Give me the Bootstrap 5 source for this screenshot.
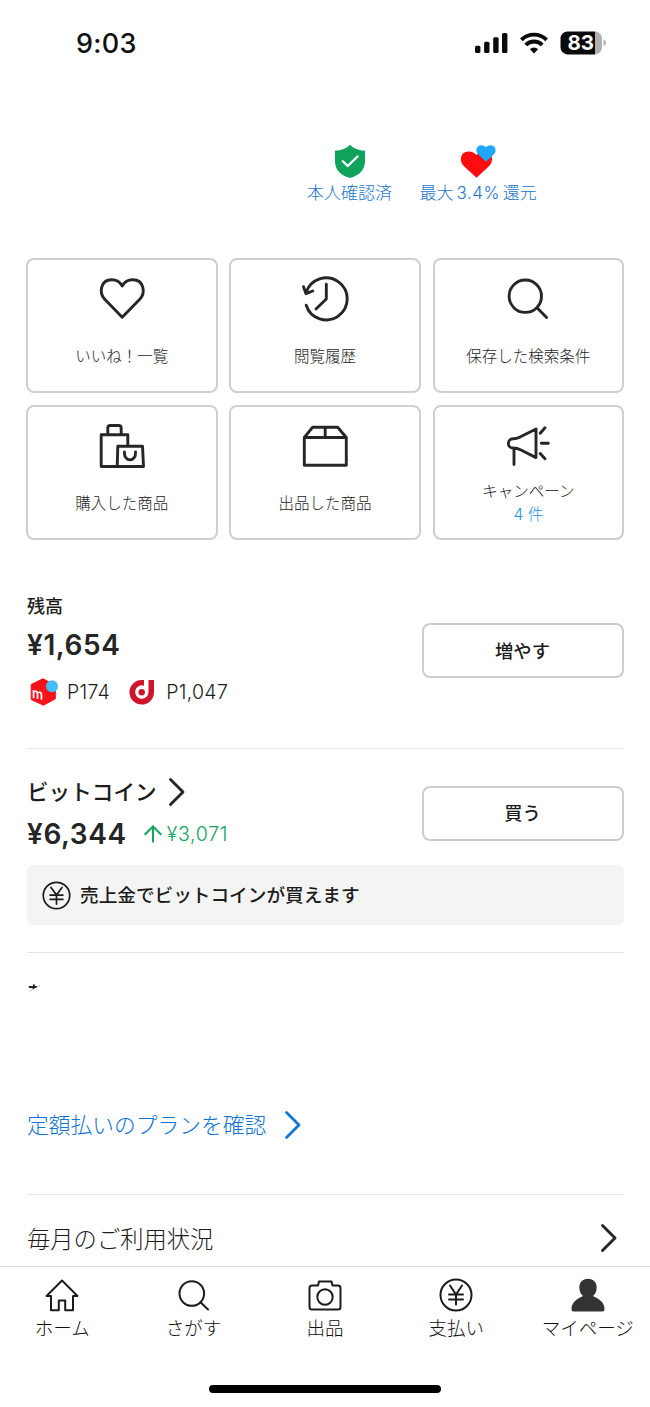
<!DOCTYPE html>
<html lang="ja">
<head>
<meta charset="utf-8">
<meta name="viewport" content="width=device-width, initial-scale=1">
<title>マイページ</title>
<link href="https://cdn.jsdelivr.net/npm/bootstrap@5.3.0/dist/css/bootstrap.min.css" rel="stylesheet">
<style>
  body { font-family: Inter, "Noto Sans CJK JP", sans-serif; color: #1c1c1c; background: #fff; }
  svg { display: block; flex: none; overflow: visible; }
  .screen { width: 650px; height: 1407px; overflow: hidden; }
  .statusbar { height: 86px; padding: 28px 44px 0 76px; }
  .clock { font-size: 27px; font-weight: 550; line-height: 32px; letter-spacing: .3px; color: #111; }
  .status-icons { gap: 12px; padding-top: 3px; }
  .perks { height: 172px; padding: 58px 110px 0 307px; gap: 27.5px; }
  .perk { color: #1b75cc; font-size: 17px; font-weight: 300; line-height: 20px; text-decoration: none; white-space: nowrap; }
  .perk svg { margin-bottom: 5.4px; }
  .rate { margin: 0 3px; letter-spacing: .5px; font-weight: 350; }
  .inset-x { margin-left: 27px; margin-right: 26.5px; }
  .tiles { display: grid; grid-template-columns: repeat(3, 191.5px); grid-auto-rows: 135px; gap: 12px 11.8px; margin-left: 26px; }
  .tile { border: 2px solid #cfcfcf; border-radius: 8px; padding-top: 15px; color: #1c1c1c; text-decoration: none; font-size: 15.5px; font-weight: 300; line-height: 20px; white-space: nowrap; }
  .tile span { margin-top: 24px; }
  .tile .two-line { margin-top: 12px; }
  .tile .tally { margin-top: 3px; color: #1a8fee; }
  .ico { fill: none; stroke: #262626; stroke-width: 2.9; stroke-linecap: round; stroke-linejoin: round; }
  .rule { border-bottom: 1.5px solid #e6e6e6; }
  .balance { height: 209px; padding-top: 55px; }
  .bitcoin { height: 203.5px; padding-top: 28px; }
  .label-s { font-size: 18px; font-weight: 500; line-height: 24px; }
  .label-m { font-size: 21.6px; font-weight: 500; line-height: 30px; }
  .amount { font-size: 28px; font-weight: 600; line-height: 36px; letter-spacing: .6px; color: #262626; }
  .amount-row { margin-top: 9px; height: 36px; }
  .pts { font-size: 19.5px; font-weight: 350; line-height: 28px; letter-spacing: .3px; margin-top: 15px; }
  .d-mark { margin-left: 19px; margin-right: 11px; }
  .gain { color: #12a35c; font-size: 19.5px; font-weight: 350; line-height: 28px; letter-spacing: .7px; }
  .gain-arrow { margin: 0 5px 0 17px; }
  .act { width: 202px; height: 55px; border: 2px solid #cdcdcd; border-radius: 8px; font-size: 18.3px; font-weight: 500; color: #1c1c1c; padding: 0; line-height: 50px; }
  .act-low { margin-top: 28px; }
  .act-high { margin-top: 8.8px; }
  .notice { height: 60px; background: #f4f4f4; border-radius: 6px; margin-top: 13px; padding-left: 15px; gap: 9px; font-size: 18.65px; font-weight: 500; }
  .notice span { padding-top: 2px; }
  .plan { height: 242.5px; padding-top: 28px; }
  .plan a { margin-top: 117px; color: #1173d4; font-size: 21.75px; font-weight: 300; line-height: 30px; text-decoration: none; gap: 19px; }
  .usage { height: 71px; padding: 29px 7px 0 0; font-size: 23.3px; font-weight: 300; line-height: 32px; }
  .tabs { height: 141px; border-top: 1.5px solid #e0e0e0; padding-top: 9px; font-size: 18.5px; font-weight: 300; line-height: 24px; }
  .tabs a { color: #111; text-decoration: none; width: 131.4px; white-space: nowrap; }
  .tabs svg { margin-bottom: 2px; }
  .tabrow { margin: 0 -3.5px; }
  .thin { fill: none; stroke: #1c1c1c; stroke-width: 2; stroke-linecap: round; stroke-linejoin: round; }
  .homebar { width: 232px; height: 8px; border-radius: 4px; background: #000; margin-top: 44.5px; }
</style>
</head>
<body>
<div class="screen d-flex flex-column mx-auto">

  <header class="statusbar d-flex justify-content-between align-items-start">
    <div class="clock">9:03</div>
    <div class="status-icons d-flex">
      <svg width="33" height="24" viewBox="0 0 33 24"><g fill="#0a0a0a"><rect x="0" y="14.7" width="5.4" height="7.3" rx="1.6"/><rect x="9.1" y="10.7" width="5.4" height="11.3" rx="1.6"/><rect x="18.2" y="6.2" width="5.4" height="15.8" rx="1.6"/><rect x="27" y="2" width="5.4" height="20" rx="1.6"/></g></svg>
      <svg width="28" height="24" viewBox="0 0 28 24"><g fill="none" stroke="#0a0a0a" stroke-width="3.9"><path d="M1.4 8.8A18 18 0 0 1 26.6 8.8"/><path d="M5.800 14A11.400 11.400 0 0 1 22.200 14"/></g><path d="M14 22.400L9.900 18.300A5.800 5.800 0 0 1 18.100 18.300Z" fill="#0a0a0a"/></svg>
      <svg width="46" height="24" viewBox="0 0 46 24"><path d="M7.500 .4H35V23.400H7.500A7 7 0 0 1 .5 16.400V7.400A7 7 0 0 1 7.500 .4Z" fill="#0a0a0a"/><path d="M35 .4A7 7 0 0 1 42 7.400V16.400A7 7 0 0 1 35 23.400Z" fill="#b0b0b0"/><path d="M43.600 8.300Q46 9.500 46 12T43.600 15.600Z" fill="#b0b0b0"/><text x="20.800" y="19.200" text-anchor="middle" font-size="20.500" font-weight="700" fill="#fff">83</text></svg>
    </div>
  </header>

  <section class="perks d-flex">
    <a href="#" class="perk d-flex flex-column align-items-center">
      <svg width="32" height="34" viewBox="0 0 32 34"><path d="M16 .7C19.500 4.400 24.500 6.300 31 6.800V17.500C31 26 25 31.500 16 34C7 31.500 1 26 1 17.500V6.800C7.500 6.300 12.500 4.400 16 .7Z" fill="#10a35c"/><path d="M8.800 17.200L13.700 22L23.500 12.500" fill="none" stroke="#fff" stroke-width="2.300" stroke-linecap="round" stroke-linejoin="round"/></svg>
      <span>本人確認済</span>
    </a>
    <a href="#" class="perk d-flex flex-column align-items-center">
      <svg width="36" height="34" viewBox="0 0 36 34"><path d="M16.500 33.700L4 22.300C-1.500 16.800 .5 7.700 8.300 7.500C12 7.400 14.500 8.800 16.500 11C18.500 8.800 21 7.400 24.700 7.500C32.500 7.700 34.500 16.800 29 22.300Z" fill="#ff0c10"/><path d="M26 17.700L18.300 10.600C14.500 6.500 16.700 1.300 21.300 1.200C23.500 1.200 24.800 2 26 3.300C27.200 2 28.500 1.200 30.700 1.200C35.300 1.300 37.500 6.500 33.700 10.600Z" fill="#1da8fb"/></svg>
      <span>最大<span class="rate">3.4%</span>還元</span>
    </a>
  </section>

  <nav class="tiles">
    <a href="#" class="tile d-flex flex-column align-items-center">
      <svg class="ico" width="48" height="48" viewBox="0 0 48 48"><path d="M24.200 42.200L6.500 24C.5 17 3 5 13.500 4.800C18.500 4.700 22 7 24.200 11C26.400 7 30 4.700 35 4.800C45.500 5 48 17 42 24Z"/></svg>
      <span>いいね！一覧</span>
    </a>
    <a href="#" class="tile d-flex flex-column align-items-center">
      <svg class="ico" width="48" height="48" viewBox="0 0 48 48"><path d="M5.200 17.500A21 21 0 1 1 5.200 30.200M2.500 11.700L5 18.700L11.700 16M25.300 9.300V24L15 34"/></svg>
      <span>閲覧履歴</span>
    </a>
    <a href="#" class="tile d-flex flex-column align-items-center">
      <svg class="ico" width="48" height="48" viewBox="0 0 48 48"><circle cx="21.300" cy="21.200" r="16.200"/><path d="M33.200 33L42.600 42.500"/></svg>
      <span>保存した検索条件</span>
    </a>
    <a href="#" class="tile d-flex flex-column align-items-center">
      <svg class="ico" width="48" height="48" viewBox="0 0 48 48"><path d="M19.200 44.500H3.200V12.800H29.800V23.500M9.800 12.500V6Q9.800 3.500 12.300 3.500H20.700Q23.200 3.500 23.200 6V12.500M19.800 24.200H44.500L45.500 44.500H19.200ZM26.500 30C25.500 40.500 38.500 40.500 37.500 30"/></svg>
      <span>購入した商品</span>
    </a>
    <a href="#" class="tile d-flex flex-column align-items-center">
      <svg class="ico" width="48" height="48" viewBox="0 0 48 48"><path d="M3.300 15.500L11.700 5.200H36.700L45.300 15.500V43.200H3.300ZM3.300 15.500H45.300M24.200 5.200V15.500"/></svg>
      <span>出品した商品</span>
    </a>
    <a href="#" class="tile d-flex flex-column align-items-center">
      <svg class="ico" width="48" height="48" viewBox="0 0 48 48"><path d="M9 16.800C13 17 14 16 17 14.500L32 7V35.600L17 28C14 26.400 13 26 9 26A4.600 4.600 0 0 1 9 16.800ZM10 26.500V42.500M36.200 11.200L41 5.800M37.300 21.300H44.300M36.200 31.500L41 36.800"/></svg>
      <span class="two-line">キャンペーン</span>
      <span class="tally">4 件</span>
    </a>
  </nav>

  <section class="balance rule inset-x d-flex justify-content-between">
    <div>
      <div class="label-s">残高</div>
      <div class="amount mt-2">¥1,654</div>
      <div class="pts d-flex align-items-center">
        <svg width="32" height="28" viewBox="0 0 32 28" class="me-2"><path d="M16 .8L28.300 7.200V20.800L16.500 27.200L4.200 21.500V6.500Z" fill="#f7121a" stroke="#f7121a" stroke-linejoin="round"/><circle cx="25" cy="8.200" r="6" fill="#45bdfb"/><text transform="translate(5 19.800) skewY(12) scale(.85 1)" font-size="14.500" font-weight="600" fill="#fff">m</text></svg>
        <span>P174</span>
        <svg width="26" height="26" viewBox="0 0 26 26" class="d-mark"><path d="M25 1H19.500V13A6.700 6.700 0 1 1 15 6.700V1H13A12.300 12.300 0 1 0 25 13.500Z" fill="#cf152d"/><circle cx="12.700" cy="13.300" r="3.200" fill="#cf152d"/></svg>
        <span>P1,047</span>
      </div>
    </div>
    <button class="btn act act-low">増やす</button>
  </section>

  <section class="bitcoin rule inset-x">
    <div class="d-flex justify-content-between">
      <div>
        <div class="label-m d-flex align-items-center"><span class="me-2">ビットコイン</span>
          <svg class="ico ms-1" width="16" height="28" viewBox="0 0 16 28"><path d="M1.500 1.500L14 14L1.500 26.500"/></svg>
        </div>
        <div class="amount-row d-flex align-items-center">
          <span class="amount">¥6,344</span>
          <svg width="18" height="18" viewBox="0 0 18 18" class="gain-arrow"><path d="M9 17.500V1.500M.7 9.700L9 1.500L17.300 9.700" fill="none" stroke="#12a35c" stroke-width="2"/></svg>
          <span class="gain">¥3,071</span>
        </div>
      </div>
      <button class="btn act act-high">買う</button>
    </div>
    <div class="notice d-flex align-items-center">
      <svg class="thin" width="29" height="29" viewBox="0 0 34 34"><circle cx="17" cy="17" r="15.500"/><path d="M10.500 7.500L17 16.500L23.500 7.500M17 16.500V27M9.500 16.500H24.500M9.500 21.500H24.500"/></svg>
      <span>売上金でビットコインが買えます</span>
    </div>
  </section>

  <section class="plan rule inset-x">
    <svg width="14" height="12" viewBox="0 0 14 12"><path d="M1.800 6H10" stroke="#222" stroke-width="2"/><path d="M7 3.300L6.300 8" stroke="#222" stroke-width="1.800"/><path d="M13 4.700L9 6.500M6 8L2.500 10.500" stroke="#bbb" fill="none"/></svg>
    <a href="#" class="d-flex align-items-center"><span>定額払いのプランを確認</span>
      <svg width="16" height="28" viewBox="0 0 16 28"><path d="M1.500 1.500L14 14L1.500 26.500" fill="none" stroke="#1173d4" stroke-width="2.800" stroke-linecap="round" stroke-linejoin="round"/></svg>
    </a>
  </section>

  <section class="usage inset-x d-flex justify-content-between align-items-start">
    <span>毎月のご利用状況</span>
    <svg class="ico" width="16" height="28" viewBox="0 0 16 28"><path d="M1.500 1.500L14 14L1.500 26.500"/></svg>
  </section>

  <footer class="tabs">
    <nav class="tabrow d-flex">
      <a href="#" class="d-flex flex-column align-items-center"><svg class="thin" width="38" height="38" viewBox="0 0 38 38"><path d="M19 4.500L3.500 20H8V34.300H15.800V24.500H22.200V34.300H30V20H34.500Z"/></svg>ホーム</a>
      <a href="#" class="d-flex flex-column align-items-center"><svg class="thin" width="38" height="38" viewBox="0 0 38 38"><circle cx="16.800" cy="17.500" r="12.300"/><path d="M25.500 26.200L33 33.500"/></svg>さがす</a>
      <a href="#" class="d-flex flex-column align-items-center"><svg class="thin" width="38" height="38" viewBox="0 0 38 38"><path d="M6 9.500H12L13 5.500H25.500L26.500 9.500H32Q34.500 9.500 34.500 12V31Q34.500 33.500 32 33.500H6Q3.500 33.500 3.500 31V12Q3.500 9.500 6 9.500Z"/><circle cx="19" cy="21" r="7.700"/></svg>出品</a>
      <a href="#" class="d-flex flex-column align-items-center"><svg class="thin" width="38" height="38" viewBox="0 0 38 38"><circle cx="19" cy="19" r="15.500"/><path d="M13 9.500L19 18.500L25 9.500M19 18.500V28.500M12 18.500H26M12 23.500H26"/></svg>支払い</a>
      <a href="#" class="d-flex flex-column align-items-center"><svg width="38" height="38" viewBox="0 0 38 38"><path d="M19 2.700C24.500 2.700 27.700 6.500 27.700 11.500C27.700 15.500 26 18.500 24 20C29 22.500 35.500 25.500 35.500 33Q35.500 35.500 33.500 35.500H4.500Q2.500 35.500 2.500 33C2.500 25.500 9 22.500 14 20C12 18.500 10.300 15.500 10.300 11.500C10.300 6.500 13.500 2.700 19 2.700Z" fill="#333"/></svg>マイページ</a>
    </nav>
    <div class="homebar mx-auto"></div>
  </footer>
</div>
<script src="https://cdn.jsdelivr.net/npm/bootstrap@5.3.0/dist/js/bootstrap.bundle.min.js"></script>
</body>
</html>
